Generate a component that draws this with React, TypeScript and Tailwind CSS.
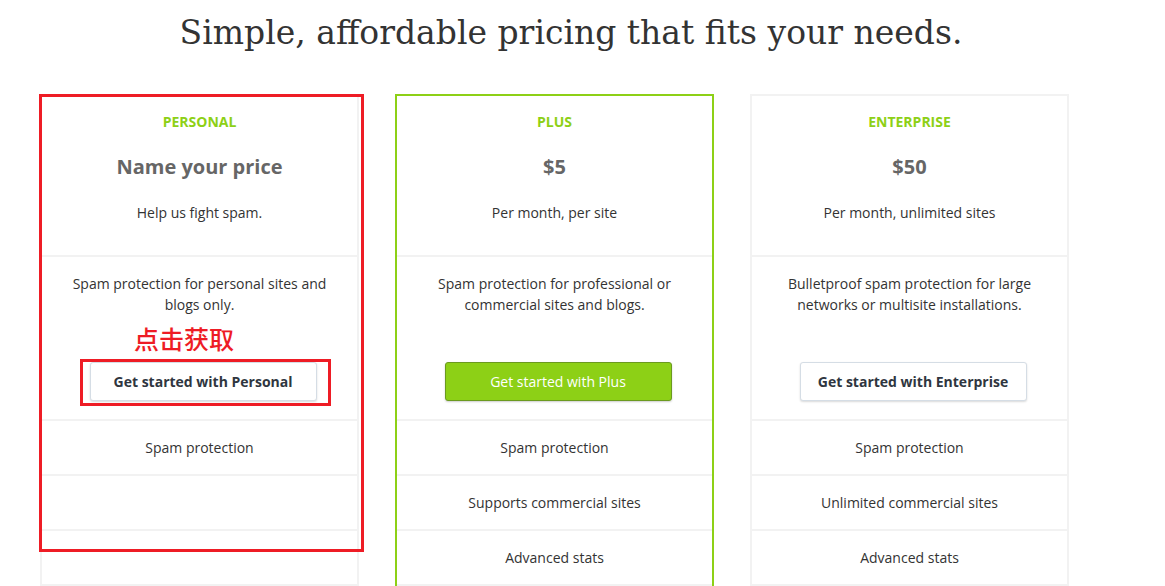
import React from "react";

const plans = [
  {
    name: "Personal",
    price: "Name your price",
    sub: "Help us fight spam.",
    desc: ["Spam protection for personal sites and", "blogs only."],
    cta: "Get started with Personal",
    features: ["Spam protection", "", ""],
    featured: false,
  },
  {
    name: "Plus",
    price: "$5",
    sub: "Per month, per site",
    desc: ["Spam protection for professional or", "commercial sites and blogs."],
    cta: "Get started with Plus",
    features: ["Spam protection", "Supports commercial sites", "Advanced stats", ""],
    featured: true,
  },
  {
    name: "Enterprise",
    price: "$50",
    sub: "Per month, unlimited sites",
    desc: ["Bulletproof spam protection for large", "networks or multisite installations."],
    cta: "Get started with Enterprise",
    features: ["Spam protection", "Unlimited commercial sites", "Advanced stats", ""],
    featured: false,
  },
];

function PlanCard({ plan }: { plan: (typeof plans)[number] }) {
  return (
    <div
      className={`w-[319px] self-start border-2 bg-white text-center ${
        plan.featured ? "border-[#8dd016]" : "border-[#f2f2f2]"
      }`}
    >
      {/* header */}
      <div className="flex h-[159px] flex-col items-center pt-[16px]">
        <div className="text-[14px] font-bold uppercase leading-[20px] text-[#8dd016]">{plan.name}</div>
        <div className="mt-[21px] text-[20px] font-bold leading-[28px] text-[#666]">{plan.price}</div>
        <div className="mt-[22px] text-[14px] leading-[20px] text-[#333]">{plan.sub}</div>
      </div>

      {/* description + button */}
      <div className="flex h-[164px] flex-col items-center border-t-2 border-[#f2f2f2] pt-[16px]">
        <p className="text-[14px] leading-[21px] text-[#333]">
          {plan.desc[0]}
          <br />
          {plan.desc[1]}
        </p>
        {plan.featured ? (
          <button className="ml-[7px] mt-[47px] h-[39px] w-[227px] rounded-[3px] border border-[#6b9a1f] bg-[#8dd016] text-[14px] text-white shadow-[0_1px_2px_rgba(0,0,0,0.2)]">
            {plan.cta}
          </button>
        ) : (
          <button className="ml-[7px] mt-[47px] h-[39px] w-[227px] rounded-[3px] border border-[#d5dde5] bg-white text-[14px] font-bold text-[#2f3640] shadow-[0_1px_2px_rgba(0,0,0,0.15)]">
            {plan.cta}
          </button>
        )}
      </div>

      {/* features */}
      {plan.features.map((f, i) => (
        <div
          key={i}
          className="flex h-[55px] items-center justify-center border-t-2 border-[#f2f2f2] text-[14px] text-[#333]"
        >
          {f}
        </div>
      ))}
    </div>
  );
}

export default function App() {
  return (
    <div
      className="relative h-[586px] overflow-hidden bg-white"
      style={{ fontFamily: '"Open Sans", "Noto Sans", sans-serif' }}
    >
      <h1
        className="w-[1142px] pt-[9px] text-center text-[33px] leading-[48px] text-[#333]"
        style={{ fontFamily: '"DejaVu Serif", "Liberation Serif", serif' }}
      >
        Simple, affordable pricing that fits your needs.
      </h1>

      <div className="mt-[37px] flex gap-[36px] pl-[40px]">
        {plans.map((p) => (
          <PlanCard key={p.name} plan={p} />
        ))}
      </div>

      {/* red annotations */}
      <div className="absolute left-[39px] top-[94px] h-[458px] w-[325px] border-[3px] border-[#ee1c25]" />
      <div className="absolute left-[80px] top-[359px] h-[47px] w-[251px] border-[3px] border-[#ee1c25]" />
      <div
        className="absolute left-[134px] top-[322px] text-[25px] font-medium leading-[32px] text-[#ee1c25]"
        style={{ fontFamily: '"Noto Sans CJK SC", sans-serif' }}
      >
        点击获取
      </div>
    </div>
  );
}
